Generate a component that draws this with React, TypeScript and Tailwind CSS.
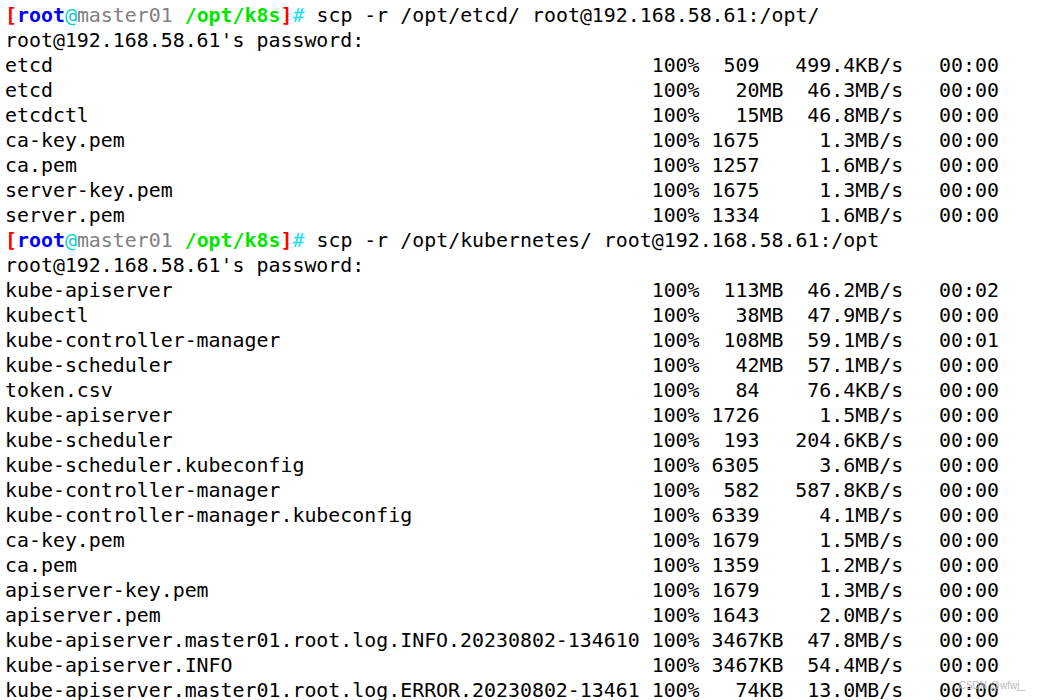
import React from "react";

type Row = [string, string, string, string];

function sizeField(s: string): string {
  if (/^\d+$/.test(s)) return s.padStart(4) + "  ";
  return s.padStart(6);
}

function line(r: Row): string {
  const [name, size, rate, eta] = r;
  return (
    name.padEnd(53) +
    " 100% " +
    sizeField(size) +
    " " +
    rate.padStart(7) +
    "/s   " +
    eta
  );
}

const batch1: Row[] = [
  ["etcd", "509", "499.4KB", "00:00"],
  ["etcd", "20MB", "46.3MB", "00:00"],
  ["etcdctl", "15MB", "46.8MB", "00:00"],
  ["ca-key.pem", "1675", "1.3MB", "00:00"],
  ["ca.pem", "1257", "1.6MB", "00:00"],
  ["server-key.pem", "1675", "1.3MB", "00:00"],
  ["server.pem", "1334", "1.6MB", "00:00"],
];

const batch2: Row[] = [
  ["kube-apiserver", "113MB", "46.2MB", "00:02"],
  ["kubectl", "38MB", "47.9MB", "00:00"],
  ["kube-controller-manager", "108MB", "59.1MB", "00:01"],
  ["kube-scheduler", "42MB", "57.1MB", "00:00"],
  ["token.csv", "84", "76.4KB", "00:00"],
  ["kube-apiserver", "1726", "1.5MB", "00:00"],
  ["kube-scheduler", "193", "204.6KB", "00:00"],
  ["kube-scheduler.kubeconfig", "6305", "3.6MB", "00:00"],
  ["kube-controller-manager", "582", "587.8KB", "00:00"],
  ["kube-controller-manager.kubeconfig", "6339", "4.1MB", "00:00"],
  ["ca-key.pem", "1679", "1.5MB", "00:00"],
  ["ca.pem", "1359", "1.2MB", "00:00"],
  ["apiserver-key.pem", "1679", "1.3MB", "00:00"],
  ["apiserver.pem", "1643", "2.0MB", "00:00"],
  ["kube-apiserver.master01.root.log.INFO.20230802-134610", "3467KB", "47.8MB", "00:00"],
  ["kube-apiserver.INFO", "3467KB", "54.4MB", "00:00"],
  ["kube-apiserver.master01.root.log.ERROR.20230802-13461", "74KB", "13.0MB", "00:00"],
];

function Prompt({ cmd }: { cmd: string }) {
  return (
    <div className="h-[25px]">
      <span className="font-bold text-[#ff0000]">[</span>
      <span className="font-bold text-[#0000ff]">root</span>
      <span className="text-[#00d0d0]">@</span>
      <span className="text-[#808080]">master01</span>{" "}
      <span className="font-bold text-[#00e600]">/opt/k8s</span>
      <span className="font-bold text-[#ff0000]">]</span>
      <span className="text-[#20e0f0]">#</span>
      {" " + cmd}
    </div>
  );
}

function Line({ text }: { text: string }) {
  return <div className="h-[25px]">{text}</div>;
}

export default function App() {
  return (
    <div className="relative w-[1039px] h-[700px] overflow-hidden bg-white">
      <div
        className="pl-[5px] pt-[3px] text-black whitespace-pre text-[19.9px] leading-[25px]"
        style={{ fontFamily: '"DejaVu Sans Mono", "Liberation Mono", monospace' }}
      >
        <Prompt cmd="scp -r /opt/etcd/ root@192.168.58.61:/opt/" />
        <Line text="root@192.168.58.61's password: " />
        {batch1.map((r, i) => (
          <Line key={"a" + i} text={line(r)} />
        ))}
        <Prompt cmd="scp -r /opt/kubernetes/ root@192.168.58.61:/opt" />
        <Line text="root@192.168.58.61's password: " />
        {batch2.map((r, i) => (
          <Line key={"b" + i} text={line(r)} />
        ))}
      </div>
      <div
        className="absolute right-[14px] bottom-[8px] text-[10px] leading-[12px] text-[#b8b8b8]"
        style={{ fontFamily: '"Liberation Sans", Arial, sans-serif' }}
      >
        CSDN @wfwj_
      </div>
    </div>
  );
}
